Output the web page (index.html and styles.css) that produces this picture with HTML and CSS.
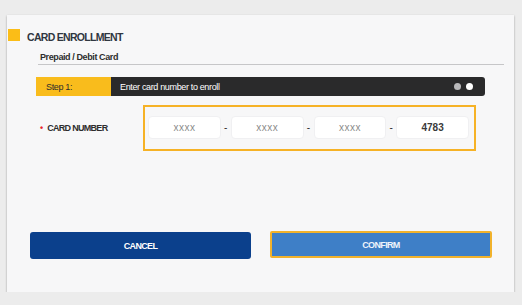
FILE: index.html
```html
<!DOCTYPE html>
<html lang="en">
<head>
    <meta charset="UTF-8">
    <meta name="viewport" content="width=device-width, initial-scale=1.0">
    <title>Card Enrollment</title>
    <link rel="stylesheet" href="styles.css">
</head>
<body>
    <div class="card">
        <div class="card-head">
            <span class="mark"></span>
            <h1>CARD ENROLLMENT</h1>
        </div>
        <div class="card-body">
            <h2 class="subtitle">Prepaid / Debit Card</h2>
            <div class="step-bar">
                <div class="step-num">Step 1:</div>
                <div class="step-text">Enter card number to enroll</div>
                <div class="step-dots">
                    <span class="dot"></span>
                    <span class="dot active"></span>
                </div>
            </div>
            <div class="field">
                <label class="field-label"><span class="req">&bull;</span>CARD NUMBER</label>
                <div class="card-inputs">
                    <input type="text" class="num" placeholder="xxxx">
                    <span class="sep">-</span>
                    <input type="text" class="num" placeholder="xxxx">
                    <span class="sep">-</span>
                    <input type="text" class="num" placeholder="xxxx">
                    <span class="sep">-</span>
                    <input type="text" class="num" value="4783">
                </div>
            </div>
        </div>
        <div class="actions">
            <button type="button" class="btn btn-cancel">CANCEL</button>
            <button type="button" class="btn btn-confirm">CONFIRM</button>
        </div>
    </div>
</body>
</html>
```

FILE: styles.css
```css
body {
    margin: 0;
    padding: 15px 8px 0 7px;
    background-color: #ececec;
    font-family: "Liberation Sans", Arial, sans-serif;
}

.card {
    width: 507px;
    height: 277px;
    box-sizing: border-box;
    background-color: #f7f7f8;
    box-shadow: 0 1px 2px rgba(0, 0, 0, 0.35);
}

.card-head {
    display: flex;
    align-items: flex-start;
    padding: 14px 0 0 1px;
    height: 12px;
}

.mark {
    width: 12px;
    height: 12px;
    background-color: #fbbd17;
}

h1 {
    margin: 2px 0 0 7px;
    font-size: 10.5px;
    line-height: 12px;
    letter-spacing: -0.7px;
    font-weight: bold;
    color: #2f3640;
}

.card-body {
    padding: 0 29px;
}

.subtitle {
    margin: 10px -19px 0 2px;
    padding: 0 0 1px 2px;
    font-size: 9px;
    line-height: 12px;
    letter-spacing: -0.4px;
    font-weight: bold;
    color: #2d2d2d;
    border-bottom: 1px solid #c6c6c8;
}

.step-bar {
    display: flex;
    align-items: center;
    height: 19px;
    margin-top: 12px;
    background-color: #2a2a2b;
    border-radius: 0 3px 3px 0;
    font-size: 9px;
    letter-spacing: -0.35px;
}

.step-num {
    width: 65px;
    height: 100%;
    padding-left: 10px;
    display: flex;
    align-items: center;
    background-color: #f9bc1c;
    color: #2d2d2d;
}

.step-text {
    flex: 1;
    padding-left: 9px;
    color: #ffffff;
}

.step-dots {
    display: flex;
    gap: 5px;
    padding-right: 12px;
}

.dot {
    width: 7px;
    height: 7px;
    border-radius: 50%;
    background-color: #b9b9bb;
}

.dot.active {
    background-color: #ffffff;
}

.field {
    display: flex;
    align-items: center;
    margin-top: 9px;
}

.field-label {
    width: 103px;
    padding-left: 4px;
    font-size: 9px;
    letter-spacing: -0.7px;
    font-weight: bold;
    color: #2d2d2d;
}

.req {
    color: #e8262c;
    margin-right: 4px;
    letter-spacing: 0;
}

.card-inputs {
    display: flex;
    align-items: center;
    width: 333px;
    height: 46px;
    box-sizing: border-box;
    padding: 9px 5px 10px 3px;
    border: 2px solid #f6b226;
}

.num {
    flex: 1;
    min-width: 0;
    height: 23px;
    box-sizing: border-box;
    padding: 0;
    border: 1px solid #f0f0f2;
    border-radius: 4px;
    background-color: #ffffff;
    text-align: center;
    font-family: "Liberation Sans", Arial, sans-serif;
    font-size: 10px;
    font-weight: bold;
    color: #3a3a3a;
}

.num::placeholder {
    font-weight: normal;
    color: #8a8a8a;
    letter-spacing: 0.5px;
}

.sep {
    width: 10px;
    text-align: center;
    font-size: 10px;
    color: #2d2d2d;
}

.actions {
    display: flex;
    gap: 19px;
    padding-left: 23px;
    margin-top: 81px;
}

.btn {
    width: 221px;
    height: 27px;
    border: none;
    border-radius: 3px;
    font-family: "Liberation Sans", Arial, sans-serif;
    font-size: 9px;
    letter-spacing: -0.65px;
    font-weight: bold;
    color: #ffffff;
    cursor: pointer;
}

.btn-cancel {
    background-color: #0b408c;
}

.btn-confirm {
    width: 222px;
    margin-top: -1px;
    background-color: #3e7fc7;
    border: 2px solid #f1b22c;
    border-radius: 2px;
    color: #eef4fb;
}
```
